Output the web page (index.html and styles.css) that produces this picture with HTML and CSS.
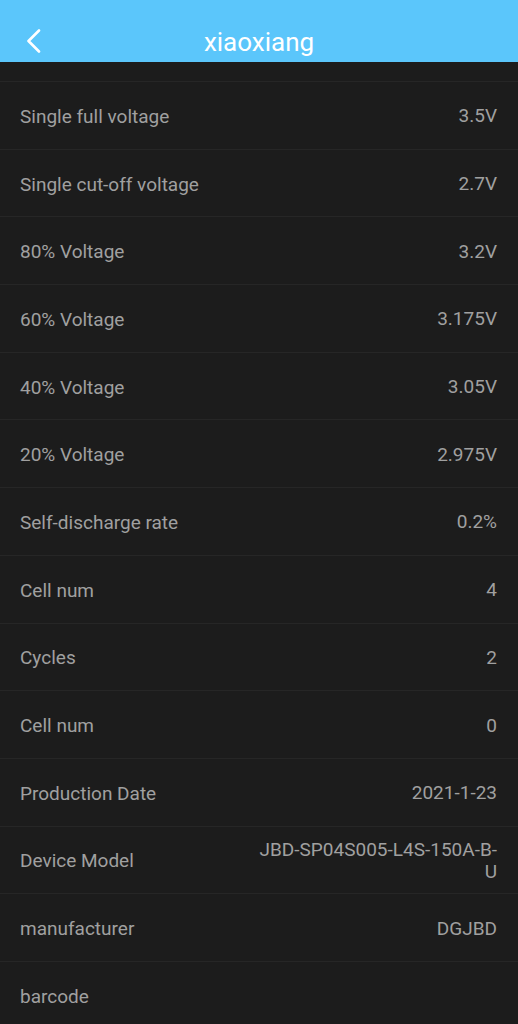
FILE: index.html
```html
<!DOCTYPE html>
<html lang="en">
<head>
  <meta charset="UTF-8">
  <title>xiaoxiang</title>
  <link rel="stylesheet" href="styles.css">
</head>
<body>

<div class="header">
  <span class="back">
    <svg width="16" height="24" viewBox="0 0 16 24"><path d="M13 1.5 L2.5 12 L13 22.5" fill="none" stroke="#fff" stroke-width="2.6" stroke-linecap="round" stroke-linejoin="round"/></svg>
  </span>
  <div class="title">xiaoxiang</div>
</div>

<div class="list">
  <div class="row"><span class="label">Single full voltage</span><span class="value">3.5V</span></div>
  <div class="row"><span class="label">Single cut-off voltage</span><span class="value">2.7V</span></div>
  <div class="row"><span class="label">80% Voltage</span><span class="value">3.2V</span></div>
  <div class="row"><span class="label">60% Voltage</span><span class="value">3.175V</span></div>
  <div class="row"><span class="label">40% Voltage</span><span class="value">3.05V</span></div>
  <div class="row"><span class="label">20% Voltage</span><span class="value">2.975V</span></div>
  <div class="row"><span class="label">Self-discharge rate</span><span class="value">0.2%</span></div>
  <div class="row"><span class="label">Cell num</span><span class="value">4</span></div>
  <div class="row"><span class="label">Cycles</span><span class="value">2</span></div>
  <div class="row"><span class="label">Cell num</span><span class="value">0</span></div>
  <div class="row"><span class="label">Production Date</span><span class="value">2021-1-23</span></div>
  <div class="row"><span class="label">Device Model</span><span class="value">JBD-SP04S005-L4S-150A-B-U</span></div>
  <div class="row"><span class="label">manufacturer</span><span class="value">DGJBD</span></div>
  <div class="row"><span class="label">barcode</span><span class="value"></span></div>
</div>

</body>
</html>
```

FILE: styles.css
```css
body {
  margin: 0;
  padding: 0;
  background: #1c1c1c;
  font-family: Roboto, 'Noto Sans', sans-serif;
  color: #a0a0a0;
  overflow: hidden;
}

.header {
  height: 62px;
  background: #5bc6fb;
  display: flex;
  align-items: center;
  justify-content: center;
  position: relative;
}

.back {
  position: absolute;
  left: 26px;
  top: 29px;
  width: 16px;
  height: 24px;
  display: flex;
}

.title {
  color: #fff;
  font-size: 26px;
  margin-top: 22px;
}

.list {
  padding-top: 19px;
}

.row {
  height: 66.7px;
  box-sizing: border-box;
  height: 67.7px;
  border-top: 1px solid #262626;
  display: flex;
  align-items: center;
  justify-content: space-between;
  padding: 2px 21px 0 20px;
  font-size: 19px;
}

.value {
  max-width: 242px;
  text-align: right;
  line-height: 22px;
}
```
